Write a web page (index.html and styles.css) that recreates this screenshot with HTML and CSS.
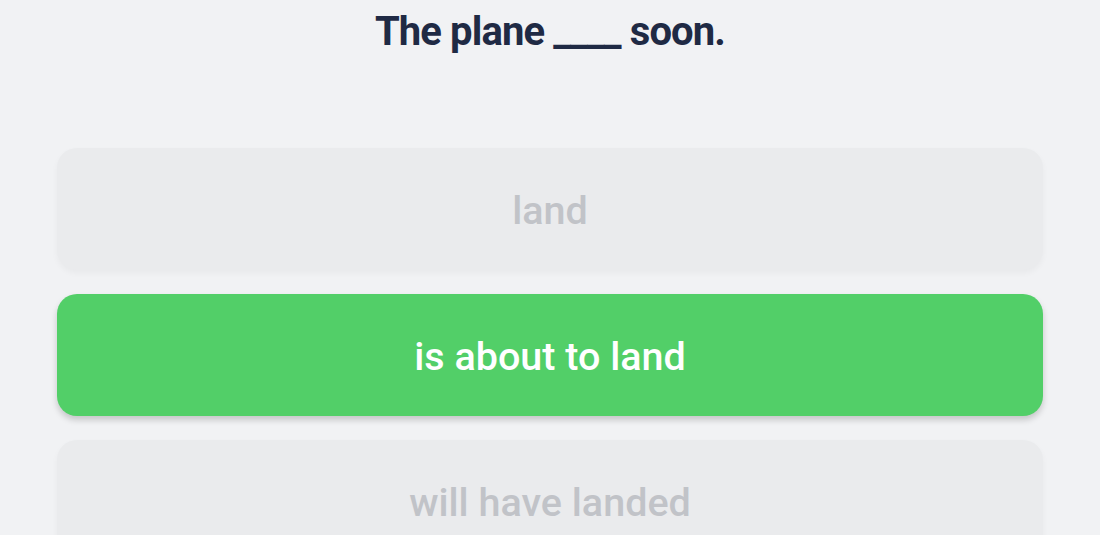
FILE: index.html
```html
<!DOCTYPE html>
<html>
<head>
<meta charset="utf-8">
<link rel="stylesheet" href="styles.css">
</head>
<body>
<main class="quiz">
  <h1 class="question">The plane ____ soon.</h1>
  <div class="options">
    <button class="option option--faded">land</button>
    <button class="option option--correct">is about to land</button>
    <button class="option option--faded">will have landed</button>
  </div>
</main>
</body>
</html>
```
FILE: styles.css
```css
html, body {
  margin: 0;
  padding: 0;
  background: #f1f2f4;
  height: 100%;
  overflow: hidden;
}
.quiz {
  font-family: Roboto, "Liberation Sans", sans-serif;
  padding: 0 57px;
  display: flex;
  flex-direction: column;
}
.question {
  margin: 0;
  padding-top: 8px;
  text-align: center;
  font-size: 40px;
  font-weight: 700;
  color: #1f2a44;
  letter-spacing: -0.9px;
  line-height: 48px;
}
.options {
  margin-top: 92px;
  display: flex;
  flex-direction: column;
  gap: 24px;
}
.option {
  height: 122px;
  border: none;
  border-radius: 20px;
  font-family: Roboto, "Liberation Sans", sans-serif;
  font-size: 39.5px;
  font-weight: 500;
  text-align: center;
  padding: 2px 0 0;
}
.option--faded {
  background: #eaebed;
  color: #c1c3c8;
  box-shadow: 0 3px 6px rgba(0, 0, 0, 0.04);
}
.option--correct {
  background: #52cf68;
  color: #ffffff;
  box-shadow: 0 4px 6px rgba(0, 0, 0, 0.18);
}
```
